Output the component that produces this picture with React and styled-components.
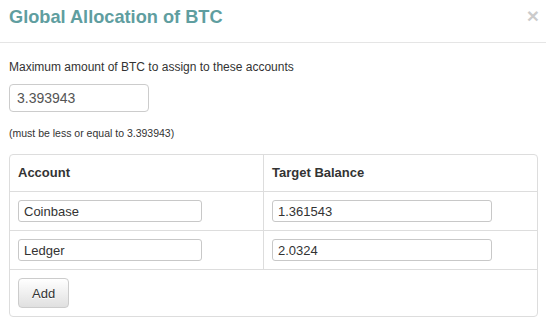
import React, { useState } from "react";
import styled, { createGlobalStyle } from "styled-components";

const GlobalStyle = createGlobalStyle`
  body {
    margin: 0;
    background: #fff;
    font-family: "Liberation Sans", Arial, sans-serif;
    color: #333;
  }
`;

const Modal = styled.div`
  width: 546px;
  background: #fff;
`;

const Header = styled.div`
  display: flex;
  justify-content: space-between;
  height: 42px;
  padding: 0 7px 0 9px;
  border-bottom: 1px solid #e5e5e5;
`;

const Title = styled.h4`
  margin: 7px 0 0;
  font-size: 18.2px;
  line-height: 20px;
  font-weight: 700;
  color: #5f9ea0;
`;

const Close = styled.button`
  align-self: flex-start;
  margin-top: 5px;
  padding: 0;
  border: 0;
  background: none;
  font-family: "Liberation Sans", Arial, sans-serif;
  font-size: 21px;
  line-height: 21px;
  font-weight: 700;
  color: #000;
  opacity: 0.2;
  cursor: pointer;
`;

const Body = styled.div`
  padding: 16px 8px 10px 9px;
`;

const Label = styled.p`
  margin: 0;
  font-size: 12px;
  line-height: 17px;
`;

const MaxInput = styled.input`
  display: block;
  box-sizing: border-box;
  width: 140px;
  height: 28px;
  margin-top: 8px;
  padding: 0 7px;
  border: 1px solid #ccc;
  border-radius: 4px;
  font-family: inherit;
  font-size: 14px;
  color: #555;
`;

const Hint = styled.p`
  margin: 14px 0 0;
  font-size: 10.5px;
  line-height: 14px;
`;

const Panel = styled.div`
  margin-top: 14px;
  border: 1px solid #ddd;
  border-radius: 4px;
`;

const Row = styled.div`
  display: grid;
  grid-template-columns: ${(p) => (p.$full ? "1fr" : "253px 1fr")};
  & + & {
    border-top: 1px solid #ddd;
  }
`;

const Cell = styled.div`
  padding: 8px;
  font-size: 13px;
  line-height: 20px;
  font-weight: ${(p) => (p.$head ? 700 : 400)};
  & + & {
    border-left: 1px solid #ddd;
  }
`;

const CellInput = styled.input`
  display: block;
  box-sizing: border-box;
  width: ${(p) => p.$w}px;
  height: 22px;
  padding: 0 5px;
  border: 1px solid #c8c8c8;
  border-radius: 3px;
  font-family: inherit;
  font-size: 13px;
  color: #333;
`;

const Button = styled.button`
  display: block;
  box-sizing: border-box;
  height: 30px;
  padding: 0 13px;
  border: 1px solid #ccc;
  border-radius: 4px;
  background: linear-gradient(to bottom, #fff 0%, #e0e0e0 100%);
  font-family: inherit;
  font-size: 13px;
  color: #333;
  text-shadow: 0 1px 0 #fff;
  cursor: pointer;
`;

const App = () => {
  const [max, setMax] = useState("3.393943");
  const [rows, setRows] = useState([
    { account: "Coinbase", target: "1.361543" },
    { account: "Ledger", target: "2.0324" },
  ]);

  const update = (i, key, value) => {
    setRows(rows.map((r, j) => (j === i ? { ...r, [key]: value } : r)));
  };

  return (
    <Modal>
      <GlobalStyle />
      <Header>
        <Title>Global Allocation of BTC</Title>
        <Close>×</Close>
      </Header>
      <Body>
        <Label>Maximum amount of BTC to assign to these accounts</Label>
        <MaxInput value={max} onChange={(e) => setMax(e.target.value)} />
        <Hint>(must be less or equal to 3.393943)</Hint>
        <Panel>
          <Row>
            <Cell $head>Account</Cell>
            <Cell $head>Target Balance</Cell>
          </Row>
          {rows.map((r, i) => (
            <Row key={i}>
              <Cell>
                <CellInput $w={184} value={r.account} onChange={(e) => update(i, "account", e.target.value)} />
              </Cell>
              <Cell>
                <CellInput $w={220} value={r.target} onChange={(e) => update(i, "target", e.target.value)} />
              </Cell>
            </Row>
          ))}
          <Row $full>
            <Cell>
              <Button onClick={() => setRows([...rows, { account: "", target: "" }])}>Add</Button>
            </Cell>
          </Row>
        </Panel>
      </Body>
    </Modal>
  );
};

export default App;
